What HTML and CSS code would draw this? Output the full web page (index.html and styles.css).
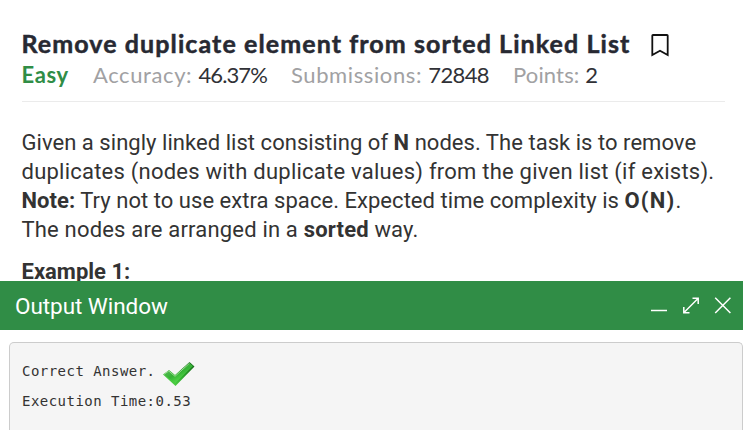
FILE: index.html
```
<!DOCTYPE html>
<html lang="en">
<head>
<meta charset="utf-8">
<title>Remove duplicate element from sorted Linked List</title>
<link rel="stylesheet" href="styles.css">
</head>
<body>
<main class="problem">
  <header class="problem-header">
    <div class="title-row">
      <h1 class="title">Remove duplicate element from sorted Linked List</h1>
      <svg class="bookmark" viewBox="0 0 20 24" width="20" height="24" fill="none" stroke="#111" stroke-width="1.8"><path d="M2.3 22V2.6Q2.3 2 3 2H17Q17.7 2 17.7 2.6V22L10 17.8Z"/></svg>
    </div>
    <div class="stats">
      <span class="easy">Easy</span>
      <span class="stat accuracy">Accuracy: <b>46.37%</b></span>
      <span class="stat submissions">Submissions: <b>72848</b></span>
      <span class="stat points">Points: <b>2</b></span>
    </div>
  </header>
  <p class="description">
    <span class="line l1">Given a singly linked list consisting of <strong>N</strong> nodes. The task is to remove</span>
    <span class="line l2">duplicates (nodes with duplicate values) from the given list (if exists).</span>
    <span class="line l3"><strong>Note:</strong> Try not to use extra space. Expected time complexity is <strong class="big-o">O(N)</strong>.</span>
    <span class="line l4">The nodes are arranged in a <strong>sorted</strong> way.</span>
  </p>
  <p class="example"><strong>Example 1:</strong></p>
</main>
<section class="output">
  <header class="output-bar">
    <h2 class="output-title">Output Window</h2>
    <div class="controls">
      <svg width="18" height="18" viewBox="0 0 18 18"><path d="M1 13.5H17"/></svg>
      <svg width="18" height="18" viewBox="0 0 18 18"><path d="M2 15.5L16 1.5M10.5 1.3H16.2V7M1.8 10V15.7H7.5"/></svg>
      <svg width="18" height="18" viewBox="0 0 18 18"><path d="M1.2 0.7L16.4 16M16.4 0.7L1.2 16"/></svg>
    </div>
  </header>
  <div class="console">
    <div class="console-line">Correct Answer.
      <svg class="check" width="34" height="26" viewBox="0 0 34 26">
        <defs><linearGradient id="g" x1="0.1" y1="0.3" x2="0.65" y2="1"><stop offset="0" stop-color="#58b858"/><stop offset="0.45" stop-color="#35b335"/><stop offset="1" stop-color="#5ee84e"/></linearGradient>
        <linearGradient id="d" x1="0" y1="1" x2="1" y2="0"><stop offset="0" stop-color="#62e552"/><stop offset="0.5" stop-color="#2eaa2e"/><stop offset="1" stop-color="#145f18"/></linearGradient></defs>
        <path d="M1 13.5L7 9L13 14L27.5 1L32.5 5.5L13.5 25Z" fill="url(#d)"/>
        <path d="M2 13.3L6.7 10L13 15.5L27.5 2.2L31 5L13.2 22Z" fill="url(#g)"/>
        <path d="M2 13.3L6.8 10L13 15.3L27.5 2.2" fill="none" stroke="#9bdc92" stroke-width="1"/>
      </svg>
    </div>
    <div class="console-line">Execution Time:0.53</div>
  </div>
</section>
</body>
</html>
```
FILE: styles.css
```
* { box-sizing: border-box; }
body {
  margin: 0;
  height: 430px;
  overflow: hidden;
  background: #fff;
  color: #333;
  display: flex;
  flex-direction: column;
}
h1, h2, p { margin: 0; }
.problem {
  height: 281px;
  flex: none;
  padding: 28px 18px 0 21.5px;
}
.problem-header {
  height: 74px;
  border-bottom: 1px solid #ebebeb;
  font-family: Lato, sans-serif;
}
.title-row { display: flex; align-items: center; height: 31px; }
.title {
  width: 628.5px;
  white-space: nowrap;
  font-size: 25px;
  line-height: 31px;
  font-weight: 700;
  letter-spacing: 1.09px;
  -webkit-text-stroke: 0.5px #272932;
  color: #272932;
}
.bookmark { flex: none; margin-top: 2px; }
.stats {
  display: flex;
  font-size: 22px;
  line-height: 32px;
  color: #a1a1a3;
  white-space: nowrap;
  letter-spacing: 0.6px;
}
.stats b { font-weight: 400; color: #303136; letter-spacing: -0.6px; }
.accuracy b { letter-spacing: -0.9px; }
.points { letter-spacing: 0.15px; }
.easy { width: 71.5px; font-weight: 700; color: #308d46; }
.accuracy { width: 198px; }
.submissions { width: 222px; }
.description, .example {
  font-family: Roboto, sans-serif;
  font-size: 22px;
  line-height: 29px;
}
.description { padding-top: 26px; }
.line { display: block; white-space: nowrap; }
.l1 { letter-spacing: 0.04px; }
.l2 { letter-spacing: 0.23px; }
.l3 { letter-spacing: 0.04px; }
.big-o { letter-spacing: 1.2px; }
.l4 { letter-spacing: 0.18px; }
.example { padding-top: 13px; }
.output { flex: none; height: 149px; position: relative; }
.output-bar {
  height: 49px;
  background: #308d46;
  display: flex;
  align-items: center;
  justify-content: space-between;
  padding: 0 11px 0 15px;
}
.output-title {
  padding-top: 2px;
  font: 400 22.5px/49px Roboto, sans-serif;
  letter-spacing: -0.05px;
  color: #fff;
}
.controls { display: flex; gap: 14px; }
.controls svg { fill: none; stroke: #fff; stroke-width: 1.5; }
.console {
  margin: 12px 0 0 9px;
  height: 88px;
  border: 1px solid #ccc;
  border-bottom: 0;
  border-radius: 5px 5px 0 0;
  background: #f5f5f5;
  padding: 13px 12px;
  font-family: "DejaVu Sans Mono", monospace;
  font-size: 14px;
  line-height: 30px;
  letter-spacing: 0.47px;
  color: #333;
}
.console-line { display: flex; height: 30px; white-space: nowrap; }
.check { margin: 5px 0 0 7px; }
```
